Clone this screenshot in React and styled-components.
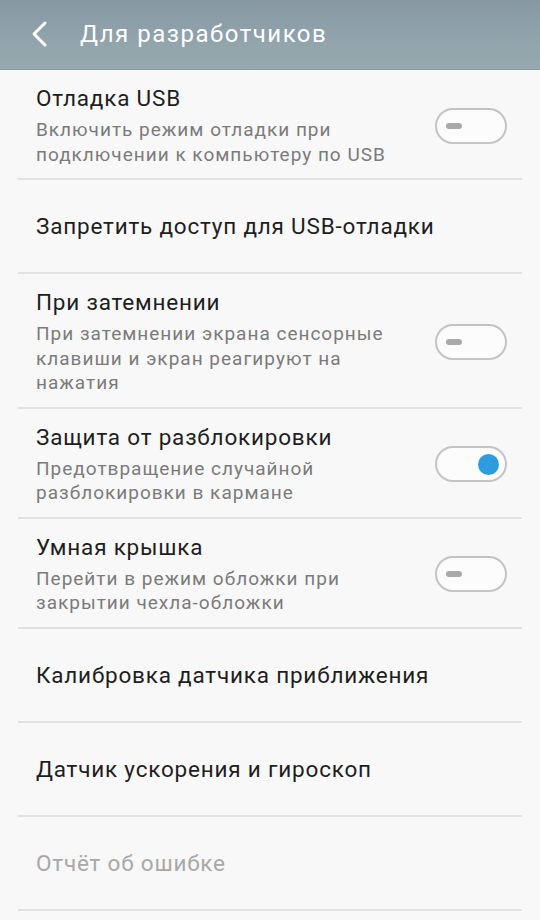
import styled, { createGlobalStyle } from "styled-components";

const Global = createGlobalStyle`
  html, body { margin: 0; padding: 0; background: #f8f8f8; }
  body { font-family: Roboto, "Noto Sans", sans-serif; }
`;

const Page = styled.div`
  width: 540px;
  min-height: 920px;
  background: #f8f8f8;
`;

const Header = styled.div`
  height: 70px;
  display: flex;
  align-items: center;
  background: linear-gradient(180deg, #8798a3 0%, #93a5ad 70%, #97a9ae 100%);
  border-bottom: 1px solid #8a9ba1;
  box-sizing: border-box;
  padding-left: 28px;
`;

const Back = styled.svg`
  width: 22px;
  height: 28px;
  margin-right: 30px;
  margin-top: -2px;
`;

const Title = styled.div`
  color: #fff;
  font-size: 24px;
  letter-spacing: 1.5px;
  margin-top: -1px;
`;

const List = styled.div`
  display: flex;
  flex-direction: column;
`;

const Row = styled.div`
  margin: 0 18px;
  border-bottom: 2px solid #e2e2e2;
  display: flex;
  align-items: center;
  box-sizing: border-box;
  min-height: ${(p) => (p.$single ? "94px" : "auto")};
  padding: ${(p) => (p.$single ? "0 15px 0 18px" : "14px 15px 11px 18px")};
`;

const Texts = styled.div`
  flex: 1;
`;

const Label = styled.div`
  font-size: 22.5px;
  letter-spacing: 0.8px;
  line-height: 28px;
  color: ${(p) => (p.$disabled ? "#a8a8a8" : "#1e1e1e")};
`;

const Sub = styled.div`
  margin-top: 6px;
  font-size: 19px;
  letter-spacing: 1px;
  line-height: 24.5px;
  color: #7b7b7b;
`;

const Toggle = styled.div`
  width: 72px;
  height: 36px;
  box-sizing: border-box;
  border: 2px solid #c4c4c4;
  border-radius: 18px;
  background: #fcfcfc;
  display: flex;
  align-items: center;
  justify-content: ${(p) => (p.$on ? "flex-end" : "flex-start")};
  padding: 0 6px 0 9px;
  margin-left: 12px;
  flex-shrink: 0;
`;

const Dash = styled.div`
  width: 16px;
  height: 6px;
  border-radius: 3px;
  background: #a9a9a9;
`;

const Knob = styled.div`
  width: 21px;
  height: 21px;
  border-radius: 50%;
  background: #2d9be0;
`;

const items = [
  { label: "Отладка USB", sub: "Включить режим отладки при подключении к компьютеру по USB", toggle: false },
  { label: "Запретить доступ для USB-отладки" },
  { label: "При затемнении", sub: "При затемнении экрана сенсорные клавиши и экран реагируют на нажатия", toggle: false },
  { label: "Защита от разблокировки", sub: "Предотвращение случайной разблокировки в кармане", toggle: true },
  { label: "Умная крышка", sub: "Перейти в режим обложки при закрытии чехла-обложки", toggle: false },
  { label: "Калибровка датчика приближения" },
  { label: "Датчик ускорения и гироскоп" },
  { label: "Отчёт об ошибке", disabled: true },
];

export default function App() {
  return (
    <Page>
      <Global />
      <Header>
        <Back viewBox="0 0 22 28">
          <path d="M17 3 L6 14 L17 25" fill="none" stroke="#fff" strokeWidth="3" strokeLinecap="round" strokeLinejoin="round" />
        </Back>
        <Title>Для разработчиков</Title>
      </Header>
      <List>
        {items.map((it) => (
          <Row key={it.label} $single={!it.sub}>
            <Texts>
              <Label $disabled={it.disabled}>{it.label}</Label>
              {it.sub && <Sub>{it.sub}</Sub>}
            </Texts>
            {it.sub && (
              <Toggle $on={it.toggle}>{it.toggle ? <Knob /> : <Dash />}</Toggle>
            )}
          </Row>
        ))}
      </List>
    </Page>
  );
}
